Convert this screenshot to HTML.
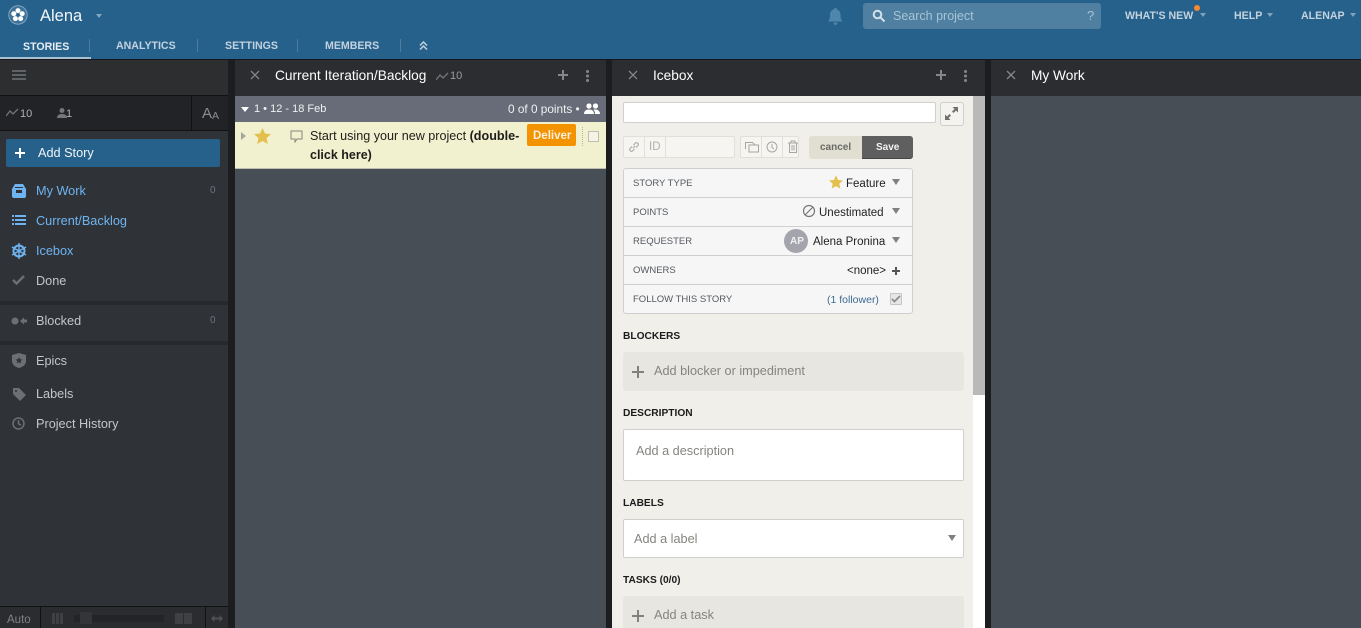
<!DOCTYPE html>
<html><head><meta charset="utf-8"><style>
html,body{margin:0;padding:0;width:1361px;height:628px;overflow:hidden;background:#1c1d1f;font-family:"Liberation Sans",sans-serif}
div,span.a,svg{position:absolute}
.t{position:absolute;white-space:nowrap;line-height:16px;font-size:13px}
.nav{color:#c3d2de;font-weight:bold;font-size:10.6px;top:38px}
.sep{top:39px;width:1px;height:13px;background:#4d7da0}
.side{left:36px;font-size:12.7px;color:#c4c6c8}
.blue{color:#6fb4f2}
.ph{color:#fff;font-size:13.7px;top:68px}
.lbl{left:633px;font-size:9.5px;color:#555a60}
.val{font-size:11.5px;color:#1f1f1f}
.row{left:624px;width:288px;height:1px;background:#cfcfcf}
.h{left:623px;font-size:10.2px;font-weight:bold;color:#1c1c1c}
.gr{color:#85857f;font-size:12.7px}
.tri{width:0;height:0;border-left:4px solid transparent;border-right:4px solid transparent;border-top:6px solid #808080}
</style></head><body>
<!-- header -->
<div style="left:0;top:0;width:1361px;height:59px;background:#26618b"></div>
<div style="left:0;top:59px;width:1361px;height:1px;background:#14181c"></div>
<svg style="left:8px;top:5px" width="20" height="20" viewBox="0 0 20 20"><circle cx="10" cy="10" r="9.2" fill="#3f7299" stroke="#86a5bc" stroke-width="1"/><g fill="#fff"><circle cx="10" cy="5.600" r="2.500"/><circle cx="14.200" cy="8.700" r="2.500"/><circle cx="12.600" cy="13.600" r="2.500"/><circle cx="7.400" cy="13.600" r="2.500"/><circle cx="5.800" cy="8.700" r="2.500"/></g><circle cx="10" cy="10" r="1.300" fill="#26618b"/></svg>
<span class="t" style="left:40px;top:8px;font-size:16.5px;color:#f2f6f9">Alena</span>
<div class="tri" style="left:96px;top:14px;border-left-width:3px;border-right-width:3px;border-top:4px solid #83a5bf"></div>
<span class="t nav" style="left:23px;top:39px;color:#e8eef3">STORIES</span>
<div class="sep" style="left:89px"></div>
<span class="t nav" style="left:116px">ANALYTICS</span>
<div class="sep" style="left:197px"></div>
<span class="t nav" style="left:225px">SETTINGS</span>
<div class="sep" style="left:297px"></div>
<span class="t nav" style="left:325px">MEMBERS</span>
<div class="sep" style="left:400px"></div>
<svg style="left:418px;top:40px" width="11" height="11" viewBox="0 0 11 11" fill="none" stroke="#c3d2de" stroke-width="1.500"><path d="M2 5.500L5.500 2L9 5.500M2 9.500L5.500 6L9 9.500"/></svg>
<div style="left:0;top:57px;width:91px;height:2px;background:#a9c0d1"></div>
<svg style="left:827px;top:7px" width="17" height="19" viewBox="0 0 17 19"><path d="M8.500 1c1 0 1.500.6 1.500 1.500C12.500 3.300 13.500 5.500 13.500 8c0 3 .5 5 2 6.500H1C2.500 13 3 11 3 8c0-2.500 1-4.700 3.500-5.500C7 1.600 7.500 1 8.500 1zM6.500 15.500h4c0 1.500-1 2.500-2 2.500s-2-1-2-2.500z" fill="#4f86ac"/></svg>
<div style="left:863px;top:3px;width:238px;height:26px;border-radius:3px;background:#4f80a1"></div>
<svg style="left:872px;top:9px" width="14" height="14" viewBox="0 0 14 14" fill="none" stroke="#d3e0e9" stroke-width="2"><circle cx="5.500" cy="5.500" r="3.800"/><path d="M8.500 8.500L12.500 12.500"/></svg>
<span class="t" style="left:893px;top:8px;color:#a9c3d5;font-size:12.5px">Search project</span>
<span class="t" style="left:1087px;top:8px;color:#a9c3d5;font-size:13px">?</span>
<span class="t nav" style="left:1125px;top:8px">WHAT'S NEW</span>
<div style="left:1194px;top:5px;width:6px;height:6px;border-radius:50%;background:#f08a35"></div>
<div class="tri" style="left:1200px;top:13px;border-left-width:3px;border-right-width:3px;border-top:4px solid #7fa3bd"></div>
<span class="t nav" style="left:1234px;top:8px">HELP</span>
<div class="tri" style="left:1267px;top:13px;border-left-width:3px;border-right-width:3px;border-top:4px solid #7fa3bd"></div>
<span class="t nav" style="left:1301px;top:8px">ALENAP</span>
<div class="tri" style="left:1350px;top:13px;border-left-width:3px;border-right-width:3px;border-top:4px solid #7fa3bd"></div>

<!-- sidebar -->
<div style="left:0;top:60px;width:228px;height:568px;background:#2f3337"></div>
<div style="left:0;top:60px;width:228px;height:35px;background:#2d2e30"></div>
<div style="left:12px;top:70px;width:14px;height:2px;background:#5f6266;box-shadow:0 4px 0 #5f6266,0 8px 0 #5f6266"></div>
<div style="left:0;top:95px;width:228px;height:1px;background:#111"></div>
<div style="left:0;top:96px;width:228px;height:34px;background:#222326"></div>
<div style="left:0;top:130px;width:228px;height:1px;background:#111"></div>
<div style="left:191px;top:96px;width:1px;height:34px;background:#111"></div>
<svg style="left:6px;top:108px" width="13" height="9" viewBox="0 0 13 9" fill="none" stroke="#72767a" stroke-width="1.300"><path d="M0 8L4 3L7 6L12 1"/></svg>
<span class="t" style="left:20px;top:106px;font-size:11px;color:#aeb1b4">10</span>
<svg style="left:57px;top:108px" width="10" height="10" viewBox="0 0 10 10" fill="#74777a"><circle cx="5" cy="2.500" r="2.500"/><path d="M0 10c0-3 2-4 5-4s5 1 5 4z"/></svg>
<span class="t" style="left:66px;top:106px;font-size:11px;color:#aeb1b4">1</span>
<span class="t" style="left:202px;top:106px;font-size:15px;color:#8b8e91">A</span>
<span class="t" style="left:212px;top:108px;font-size:10.5px;color:#8b8e91">A</span>
<div style="left:6px;top:139px;width:214px;height:28px;border-radius:2px;background:#26618b"></div>
<div style="left:15px;top:152px;width:10px;height:2px;background:#fff"></div><div style="left:19px;top:148px;width:2px;height:10px;background:#fff"></div>
<span class="t side" style="left:38px;top:145px;color:#f0f4f7">Add Story</span>

<svg style="left:12px;top:184px" width="14" height="14" viewBox="0 0 14 14"><path d="M3 0h8l3 5v7a2 2 0 0 1-2 2H2a2 2 0 0 1-2-2V5z" fill="#6fb4f2"/><path d="M3 3h8v1H3zM4 6h6v3H4z" fill="#2f3337"/></svg>
<span class="t side blue" style="top:183px">My Work</span>
<span class="t" style="left:210px;top:183px;font-size:10px;color:#6c7278">0</span>
<svg style="left:12px;top:215px" width="14" height="11" viewBox="0 0 14 11" fill="#6fb4f2"><path d="M0 0h2v2H0zM3 0h11v2H3zM0 4h2v2H0zM3 4h11v2H3zM0 8h2v2H0zM3 8h11v2H3z"/></svg>
<span class="t side blue" style="top:213px">Current/Backlog</span>
<svg style="left:11px;top:243px" width="16" height="16" viewBox="0 0 16 16" stroke="#6fb4f2" stroke-width="1.400" fill="none"><circle cx="8" cy="8" r="5.500" stroke-width="2"/><path d="M8 0v16M1 4l14 8M1 12l14-8"/></svg>
<span class="t side blue" style="top:243px">Icebox</span>
<svg style="left:12px;top:275px" width="13" height="10" viewBox="0 0 13 10" fill="none" stroke="#6d7073" stroke-width="2.400"><path d="M1 5l3.500 3.500L12 1"/></svg>
<span class="t side" style="top:273px">Done</span>
<div style="left:0;top:301px;width:228px;height:4px;background:#28292c"></div>
<svg style="left:11px;top:316px" width="16" height="10" viewBox="0 0 16 10" fill="#6d7073"><circle cx="4" cy="5" r="3.500"/><path d="M9 5l4-3.500V3.500h3v3h-3v2z"/></svg>
<span class="t side" style="top:313px">Blocked</span>
<span class="t" style="left:210px;top:313px;font-size:10px;color:#6c7278">0</span>
<div style="left:0;top:341px;width:228px;height:4px;background:#28292c"></div>
<svg style="left:12px;top:353px" width="14" height="15" viewBox="0 0 14 15"><path d="M7 0l7 2v6c0 3.500-3 6-7 7-4-1-7-3.500-7-7V2z" fill="#6d7073"/><path d="M7 4l1 2.300 2.500.2-1.900 1.600.6 2.400L7 9.200 4.800 10.500l.6-2.400L3.500 6.500 6 6.300z" fill="#2f3337"/></svg>
<span class="t side" style="top:353px">Epics</span>
<svg style="left:13px;top:388px" width="13" height="13" viewBox="0 0 13 13"><path d="M0 0h6l7 7-6 6-7-7z" fill="#6d7073"/><circle cx="3" cy="3" r="1" fill="#2f3337"/></svg>
<span class="t side" style="top:386px">Labels</span>
<svg style="left:12px;top:417px" width="13" height="13" viewBox="0 0 13 13" fill="none" stroke="#6d7073" stroke-width="1.500"><circle cx="6.500" cy="6.500" r="5.500"/><path d="M6.500 3v3.700l2.500 1.500"/></svg>
<span class="t side" style="top:416px">Project History</span>
<div style="left:0;top:606px;width:228px;height:22px;background:#2a2c2f"></div>
<div style="left:0;top:606px;width:228px;height:1px;background:#111"></div>
<div style="left:40px;top:607px;width:1px;height:21px;background:#111"></div>
<div style="left:205px;top:607px;width:1px;height:21px;background:#111"></div>
<span class="t" style="left:7px;top:612px;font-size:11.5px;color:#808386">Auto</span>
<div style="left:52px;top:613px;width:11px;height:11px;background:repeating-linear-gradient(90deg,#3e4043 0 3px,#2a2c2f 3px 4px)"></div>
<div style="left:74px;top:615px;width:90px;height:7px;background:#232427"></div>
<div style="left:80px;top:612px;width:12px;height:12px;background:#333538"></div>
<div style="left:175px;top:613px;width:17px;height:11px;background:repeating-linear-gradient(90deg,#3e4043 0 8px,#2a2c2f 8px 9px)"></div>
<svg style="left:211px;top:614px" width="12" height="9" viewBox="0 0 12 9" fill="#4e5154"><path d="M0 4.500L3.500 1v2.500h5V1L12 4.500 8.500 8V5.500h-5V8z"/></svg>

<!-- panel 1 -->
<div style="left:235px;top:60px;width:371px;height:36px;background:#2c2d30"></div>
<div style="left:235px;top:96px;width:371px;height:532px;background:#474e55"></div>
<svg style="left:250px;top:70px" width="10" height="10" viewBox="0 0 10 10" stroke="#85878a" stroke-width="1.300"><path d="M1 1l8 8M9 1l-8 8"/></svg>
<span class="t ph" style="left:275px">Current Iteration/Backlog</span>
<svg style="left:436px;top:72px" width="13" height="9" viewBox="0 0 13 9" fill="none" stroke="#72767a" stroke-width="1.300"><path d="M0 8L4 3L7 6L12 1"/></svg>
<span class="t" style="left:450px;top:68px;font-size:11px;color:#9a9da0">10</span>
<div style="left:558px;top:74px;width:10px;height:2px;background:#85878a"></div><div style="left:562px;top:70px;width:2px;height:10px;background:#85878a"></div>
<div style="left:586px;top:70px;width:3px;height:3px;border-radius:50%;background:#85878a;box-shadow:0 4.500px 0 #85878a,0 9px 0 #85878a"></div>
<div style="left:235px;top:96px;width:371px;height:26px;background:#686c78"></div>
<div class="tri" style="left:241px;top:107px;border-top:5px solid #fff"></div>
<span class="t" style="left:254px;top:101px;font-size:11px;color:#f0f0f2">1 • 12 - 18 Feb</span>
<span class="t" style="left:508px;top:101px;font-size:11.8px;color:#f0f0f2">0 of 0 points •</span>
<svg style="left:584px;top:103px" width="16" height="12" viewBox="0 0 16 12" fill="#fff"><circle cx="5" cy="3" r="2.600"/><circle cx="11.500" cy="3" r="2.600"/><path d="M0 11c0-3 2-4.500 5-4.500S10 8 10 11zM11 11c0-2-.5-3.300-1.500-4.300 3.500-.7 6.500.8 6.500 4.300z"/></svg>
<div style="left:235px;top:122px;width:371px;height:46px;background:#f2f1cf"></div>
<div style="left:235px;top:168px;width:371px;height:1px;background:#bdbdb3"></div>
<div style="left:241px;top:132px;width:0;height:0;border-top:4px solid transparent;border-bottom:4px solid transparent;border-left:5px solid #a5a59a"></div>
<svg style="left:254px;top:128px" width="17" height="16" viewBox="0 0 17 16"><path d="M8.500 0l2.500 5.500 6 .6-4.500 4 1.300 5.900L8.500 13l-5.300 3 1.300-5.900L0 6.100l6-.6z" fill="#e3c04e"/></svg>
<svg style="left:290px;top:130px" width="13" height="13" viewBox="0 0 13 13" fill="none" stroke="#85857c" stroke-width="1"><path d="M1 1h11v8H7l-2 3V9H1z"/></svg>
<span class="t" style="left:310px;top:128px;font-size:12.6px;color:#1d1d1b">Start using your new project <b>(double-</b></span>
<span class="t" style="left:310px;top:147px;font-size:12.5px;color:#1d1d1b"><b>click here)</b></span>
<div style="left:527px;top:124px;width:49px;height:22px;border-radius:2px;background:#f39300"></div>
<span class="t" style="left:533px;top:128px;font-size:11.5px;font-weight:bold;color:#fdf0dc">Deliver</span>
<div style="left:582px;top:127px;width:0;height:19px;border-left:1px dotted #b5b5a8"></div>
<div style="left:588px;top:131px;width:9px;height:9px;background:#f4f3e6;border:1px solid #bdbdb2"></div>

<!-- panel 2 -->
<div style="left:612px;top:60px;width:373px;height:36px;background:#2c2d30"></div>
<svg style="left:628px;top:70px" width="10" height="10" viewBox="0 0 10 10" stroke="#85878a" stroke-width="1.300"><path d="M1 1l8 8M9 1l-8 8"/></svg>
<span class="t ph" style="left:653px">Icebox</span>
<div style="left:936px;top:74px;width:10px;height:2px;background:#85878a"></div><div style="left:940px;top:70px;width:2px;height:10px;background:#85878a"></div>
<div style="left:964px;top:70px;width:3px;height:3px;border-radius:50%;background:#85878a;box-shadow:0 4.500px 0 #85878a,0 9px 0 #85878a"></div>
<div style="left:612px;top:96px;width:361px;height:532px;background:#f0efea"></div>
<div style="left:973px;top:96px;width:12px;height:532px;background:#fff"></div>
<div style="left:973px;top:96px;width:12px;height:299px;background:#b9b9b9"></div>

<div style="left:623px;top:102px;width:311px;height:19px;background:#fff;border:1px solid #cfcfcb;border-radius:2px"></div>
<div style="left:940px;top:102px;width:22px;height:22px;background:#f4f3ef;border:1px solid #cfcfcb;border-radius:3px"></div>
<svg style="left:945px;top:107px" width="13" height="13" viewBox="0 0 13 13" fill="#6f6f6f"><path d="M7.500 0H13v5.500L11 3.500 8.500 6 7 4.500 9.500 2zM5.500 13H0V7.500L2 9.500 4.500 7 6 8.500 3.500 11z"/></svg>

<div style="left:623px;top:136px;width:110px;height:20px;background:#f6f5f1;border:1px solid #e0dfda;border-radius:2px"></div>
<div style="left:644px;top:137px;width:1px;height:20px;background:#e0dfda"></div>
<div style="left:665px;top:137px;width:1px;height:20px;background:#e0dfda"></div>
<svg style="left:628px;top:141px" width="12" height="12" viewBox="0 0 12 12" fill="none" stroke="#b5b5b1" stroke-width="1.300"><path d="M5 7l2-2M4 5.500L2 7.500a1.800 1.800 0 0 0 2.500 2.500l2-2M8 6.500l2-2A1.800 1.800 0 0 0 7.500 2l-2 2"/></svg>
<span class="t" style="left:649px;top:139px;font-size:11.5px;color:#b0b0ac">ID</span>
<div style="left:740px;top:136px;width:57px;height:20px;background:#f6f5f1;border:1px solid #e0dfda;border-radius:2px"></div>
<div style="left:761px;top:137px;width:1px;height:20px;background:#e0dfda"></div>
<div style="left:782px;top:137px;width:1px;height:20px;background:#e0dfda"></div>
<svg style="left:745px;top:141px" width="14" height="12" viewBox="0 0 14 12" fill="none" stroke="#a5a5a1" stroke-width="1"><path d="M.5 8V1.500h7L10 4H4v7h9.500V4H10"/></svg>
<svg style="left:766px;top:141px" width="12" height="12" viewBox="0 0 12 12" fill="none" stroke="#a5a5a1" stroke-width="1"><circle cx="6" cy="6" r="5"/><path d="M6 3v3.500l2 1.500"/></svg>
<svg style="left:787px;top:140px" width="12" height="13" viewBox="0 0 12 13" fill="none" stroke="#a5a5a1" stroke-width="1"><path d="M1 3h10M4 3V1h4v2M2.500 3v9.500h7V3M5 5v5.500M7 5v5.500"/></svg>

<div style="left:809px;top:136px;width:54px;height:23px;border-radius:3px 0 0 3px;background:#e0dfd2"></div>
<span class="t" style="left:820px;top:140px;font-size:10px;font-weight:bold;color:#6b6b66">cancel</span>
<div style="left:862px;top:136px;width:51px;height:22px;border-radius:0 3px 3px 0;background:#5f5f5f;border-bottom:1px solid #444"></div>
<span class="t" style="left:876px;top:140px;font-size:10px;font-weight:bold;color:#f4f4f4">Save</span>

<div style="left:623px;top:168px;width:288px;height:144px;background:#f6f6f6;border:1px solid #cfcfcf;border-radius:3px"></div>
<div class="row" style="top:197px"></div><div class="row" style="top:226px"></div><div class="row" style="top:255px"></div><div class="row" style="top:284px"></div>
<span class="t lbl" style="top:176px">STORY TYPE</span>
<svg style="left:829px;top:175px" width="14" height="14" viewBox="0 0 17 16"><path d="M8.500 0l2.500 5.500 6 .6-4.500 4 1.300 5.900L8.500 13l-5.300 3 1.300-5.900L0 6.100l6-.6z" fill="#e3c04e"/></svg>
<span class="t val" style="left:846px;top:176px">Feature</span>
<div class="tri" style="left:892px;top:179px"></div>
<span class="t lbl" style="top:205px">POINTS</span>
<svg style="left:802px;top:204px" width="14" height="14" viewBox="0 0 14 14" fill="none" stroke="#777" stroke-width="1.200"><circle cx="7" cy="7" r="5.500"/><path d="M3 11l8-8"/></svg>
<span class="t val" style="left:819px;top:205px">Unestimated</span>
<div class="tri" style="left:892px;top:208px"></div>
<span class="t lbl" style="top:234px">REQUESTER</span>
<div style="left:784px;top:229px;width:24px;height:24px;border-radius:50%;background:#a4a5ac"></div>
<span class="t" style="left:790px;top:234px;font-size:10px;font-weight:bold;color:#f0f0f2">AP</span>
<span class="t val" style="left:813px;top:234px">Alena Pronina</span>
<div class="tri" style="left:892px;top:237px"></div>
<span class="t lbl" style="top:263px">OWNERS</span>
<span class="t val" style="left:847px;top:263px">&lt;none&gt;</span>
<div style="left:892px;top:270px;width:8px;height:2px;background:#555"></div><div style="left:895px;top:267px;width:2px;height:8px;background:#555"></div>
<span class="t lbl" style="top:292px">FOLLOW THIS STORY</span>
<span class="t" style="left:827px;top:292px;font-size:10.5px;color:#3d6a93">(1 follower)</span>
<div style="left:890px;top:293px;width:10px;height:10px;background:#e6e6e6;border:1px solid #c6c6c6;border-radius:1px"></div>
<svg style="left:891px;top:295px" width="10" height="8" viewBox="0 0 10 8" fill="none" stroke="#8b8b8b" stroke-width="1.800"><path d="M1 4l2.500 2.500L9 1"/></svg>

<span class="t h" style="top:329px">BLOCKERS</span>
<div style="left:623px;top:352px;width:341px;height:39px;background:#e7e6e0;border-radius:3px"></div>
<div style="left:632px;top:371px;width:12px;height:2px;background:#82827d"></div><div style="left:637px;top:366px;width:2px;height:12px;background:#82827d"></div>
<span class="t gr" style="left:654px;top:363px">Add blocker or impediment</span>
<span class="t h" style="top:406px">DESCRIPTION</span>
<div style="left:623px;top:429px;width:339px;height:50px;background:#fff;border:1px solid #cfcfcb;border-radius:2px"></div>
<span class="t gr" style="left:636px;top:443px">Add a description</span>
<span class="t h" style="top:496px">LABELS</span>
<div style="left:623px;top:519px;width:339px;height:37px;background:#fff;border:1px solid #cfcfcb;border-radius:2px"></div>
<span class="t gr" style="left:634px;top:531px">Add a label</span>
<div class="tri" style="left:948px;top:535px"></div>
<span class="t h" style="top:573px">TASKS (0/0)</span>
<div style="left:623px;top:596px;width:341px;height:32px;background:#e7e6e0;border-radius:3px 3px 0 0"></div>
<div style="left:632px;top:615px;width:12px;height:2px;background:#82827d"></div><div style="left:637px;top:610px;width:2px;height:12px;background:#82827d"></div>
<span class="t gr" style="left:654px;top:607px">Add a task</span>

<!-- panel 3 -->
<div style="left:991px;top:60px;width:370px;height:36px;background:#2c2d30"></div>
<div style="left:991px;top:96px;width:370px;height:532px;background:#474e55"></div>
<svg style="left:1006px;top:70px" width="10" height="10" viewBox="0 0 10 10" stroke="#85878a" stroke-width="1.300"><path d="M1 1l8 8M9 1l-8 8"/></svg>
<span class="t ph" style="left:1031px">My Work</span>
</body></html>
